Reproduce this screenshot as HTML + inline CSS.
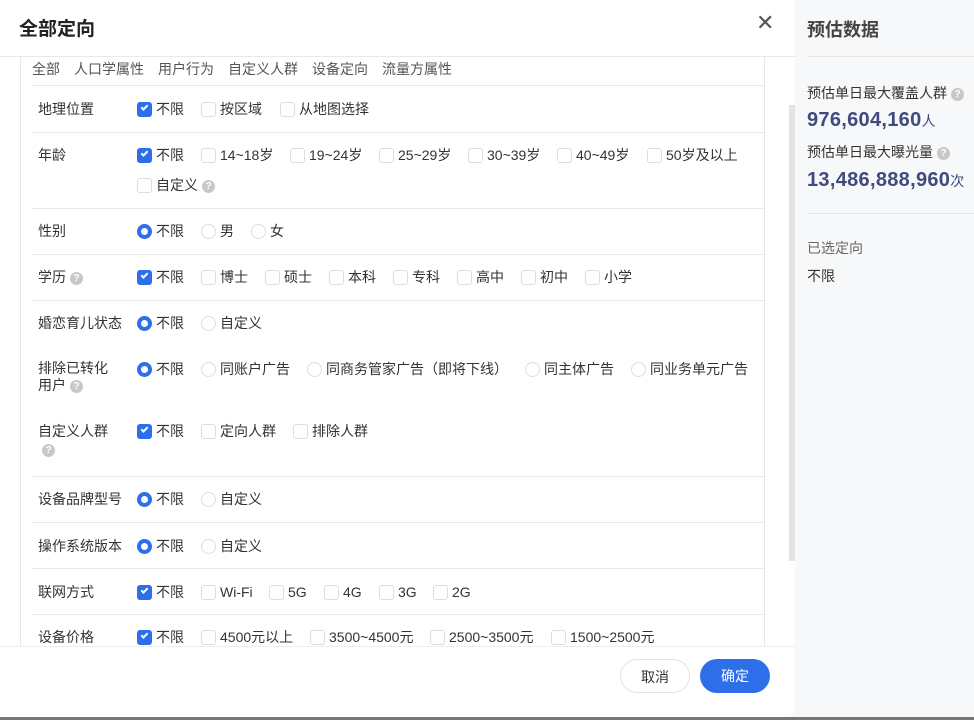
<!DOCTYPE html>
<html><head><meta charset="utf-8"><style>
*,*:before,*:after{margin:0;padding:0;box-sizing:border-box}
body{width:974px;height:720px;overflow:hidden;background:#f7f8fa;font-family:"Liberation Sans","Noto Sans CJK SC",sans-serif;font-size:14px;color:#333;position:relative}
.modal{position:absolute;left:0;top:0;width:795px;height:717px;background:#fff;border-bottom-right-radius:8px;overflow:hidden}
.bot{position:absolute;left:0;top:717px;width:974px;height:3px;background:#777}
.t{position:absolute;left:19px;top:14px;font-size:19px;font-weight:bold;color:#222}
.x{position:absolute;left:756px;top:10px;font-size:22px;color:#555}
.hl{position:absolute;left:0;top:56px;width:795px;height:1px;background:#e8e8e8}
.vl{position:absolute;top:57px;width:1px;height:590px;background:#e8e8e8}
.tabs{position:absolute;left:32px;top:59px;font-size:14px;color:#555}
.tabs span{margin-right:14px}
.rl{position:absolute;left:32px;width:732px;height:1px;background:#e8e8e8}
.lb{position:absolute;left:38px;font-size:14px;color:#333;line-height:17px}
.o{position:absolute;font-size:14px;color:#333;white-space:nowrap;line-height:18px;padding-left:19px}
.o:before{content:"";position:absolute;left:0;top:2px;width:15px;height:15px;border:1px solid #ddd;border-radius:3px;background:#fff}
.o.c:before{background:#2d6fe8;border-color:#2d6fe8}
.o.c:after{content:"";position:absolute;left:4px;top:5px;width:7px;height:4px;border-left:2px solid #fff;border-bottom:2px solid #fff;transform:rotate(-45deg)}
.o.r:before{border-radius:50%}
.o.r.c:before{background:#fff;border:4.5px solid #2d6fe8}
.o.r.c:after{display:none}
.q{display:inline-block;width:13px;height:13px;border-radius:50%;background:#c8c8c8;color:#fff;font-size:10px;line-height:13px;text-align:center;font-weight:bold;vertical-align:1px;margin-left:4px}
.sb{position:absolute;left:789px;top:105px;width:6px;height:456px;background:#e3e3e3}
.ft{position:absolute;left:0;top:646px;width:795px;height:1px;background:#eee}
.btn{position:absolute;top:659px;width:70px;height:34px;border-radius:17px;text-align:center;line-height:34px;font-size:14px}
.rp{position:absolute;left:807px;color:#333}
.num{font-size:20px;font-weight:bold;color:#404a7e;letter-spacing:0.3px}
</style></head><body>
<div class="modal">
<div class="t">全部定向</div><div class="x">✕</div>
<div class="hl"></div>
<div class="vl" style="left:20px"></div><div class="vl" style="left:764px"></div>
<div class="tabs"><span>全部</span><span>人口学属性</span><span>用户行为</span><span>自定义人群</span><span>设备定向</span><span>流量方属性</span></div>
<div class="rl" style="top:85px"></div><div class="rl" style="top:132px"></div><div class="rl" style="top:208px"></div><div class="rl" style="top:254px"></div><div class="rl" style="top:300px"></div><div class="rl" style="top:476px"></div><div class="rl" style="top:522px"></div><div class="rl" style="top:568px"></div><div class="rl" style="top:614px"></div>

<div class="lb" style="top:101px">地理位置</div>
<div class="o c" style="left:137px;top:100px">不限</div><div class="o" style="left:201px;top:100px">按区域</div><div class="o" style="left:280px;top:100px">从地图选择</div>

<div class="lb" style="top:147px">年龄</div>
<div class="o c" style="left:137px;top:146px">不限</div><div class="o" style="left:201px;top:146px">14~18岁</div><div class="o" style="left:290px;top:146px">19~24岁</div><div class="o" style="left:379px;top:146px">25~29岁</div><div class="o" style="left:468px;top:146px">30~39岁</div><div class="o" style="left:557px;top:146px">40~49岁</div><div class="o" style="left:647px;top:146px">50岁及以上</div>
<div class="o" style="left:137px;top:176px">自定义<span class="q">?</span></div>

<div class="lb" style="top:223px">性别</div>
<div class="o r c" style="left:137px;top:222px">不限</div><div class="o r" style="left:201px;top:222px">男</div><div class="o r" style="left:251px;top:222px">女</div>

<div class="lb" style="top:269px">学历<span class="q">?</span></div>
<div class="o c" style="left:137px;top:268px">不限</div><div class="o" style="left:201px;top:268px">博士</div><div class="o" style="left:265px;top:268px">硕士</div><div class="o" style="left:329px;top:268px">本科</div><div class="o" style="left:393px;top:268px">专科</div><div class="o" style="left:457px;top:268px">高中</div><div class="o" style="left:521px;top:268px">初中</div><div class="o" style="left:585px;top:268px">小学</div>

<div class="lb" style="top:315px">婚恋育儿状态</div>
<div class="o r c" style="left:137px;top:314px">不限</div><div class="o r" style="left:201px;top:314px">自定义</div>

<div class="lb" style="top:360px">排除已转化<br>用户<span class="q">?</span></div>
<div class="o r c" style="left:137px;top:360px">不限</div><div class="o r" style="left:201px;top:360px">同账户广告</div><div class="o r" style="left:307px;top:360px">同商务管家广告（即将下线）</div><div class="o r" style="left:525px;top:360px">同主体广告</div><div class="o r" style="left:631px;top:360px">同业务单元广告</div>

<div class="lb" style="top:423px">自定义人群<br><span class="q" style="margin:4px 0 0 4px">?</span></div>
<div class="o c" style="left:137px;top:422px">不限</div><div class="o" style="left:201px;top:422px">定向人群</div><div class="o" style="left:293px;top:422px">排除人群</div>

<div class="lb" style="top:491px">设备品牌型号</div>
<div class="o r c" style="left:137px;top:490px">不限</div><div class="o r" style="left:201px;top:490px">自定义</div>

<div class="lb" style="top:538px">操作系统版本</div>
<div class="o r c" style="left:137px;top:537px">不限</div><div class="o r" style="left:201px;top:537px">自定义</div>

<div class="lb" style="top:584px">联网方式</div>
<div class="o c" style="left:137px;top:583px">不限</div><div class="o" style="left:201px;top:583px">Wi-Fi</div><div class="o" style="left:269px;top:583px">5G</div><div class="o" style="left:324px;top:583px">4G</div><div class="o" style="left:379px;top:583px">3G</div><div class="o" style="left:433px;top:583px">2G</div>

<div class="lb" style="top:629px">设备价格</div>
<div class="o c" style="left:137px;top:628px">不限</div><div class="o" style="left:201px;top:628px">4500元以上</div><div class="o" style="left:310px;top:628px">3500~4500元</div><div class="o" style="left:430px;top:628px">2500~3500元</div><div class="o" style="left:551px;top:628px">1500~2500元</div>

<div style="position:absolute;left:0;top:646px;width:795px;height:71px;background:#fff"></div>
<div class="ft"></div>
<div class="sb"></div>
<div class="btn" style="left:620px;border:1px solid #e3e3e3;color:#333">取消</div>
<div class="btn" style="left:700px;background:#2d6fe8;color:#fff">确定</div>
</div>
<div class="bot"></div>
<div class="rp" style="top:16px;font-size:18px;font-weight:bold;color:#444">预估数据</div>
<div style="position:absolute;left:807px;top:56px;width:167px;height:1px;background:#e6e6e6"></div>
<div class="rp" style="top:83px;font-size:14px">预估单日最大覆盖人群<span class="q">?</span></div>
<div class="rp num" style="top:109px">976,604,160<span style="font-size:14px;font-weight:normal">人</span></div>
<div class="rp" style="top:142px;font-size:14px">预估单日最大曝光量<span class="q">?</span></div>
<div class="rp num" style="top:169px">13,486,888,960<span style="font-size:14px;font-weight:normal">次</span></div>
<div style="position:absolute;left:807px;top:213px;width:167px;height:1px;background:#e3e3e3"></div>
<div class="rp" style="top:238px;font-size:14px;color:#666">已选定向</div>
<div class="rp" style="top:266px;font-size:14px">不限</div>
</body></html>
